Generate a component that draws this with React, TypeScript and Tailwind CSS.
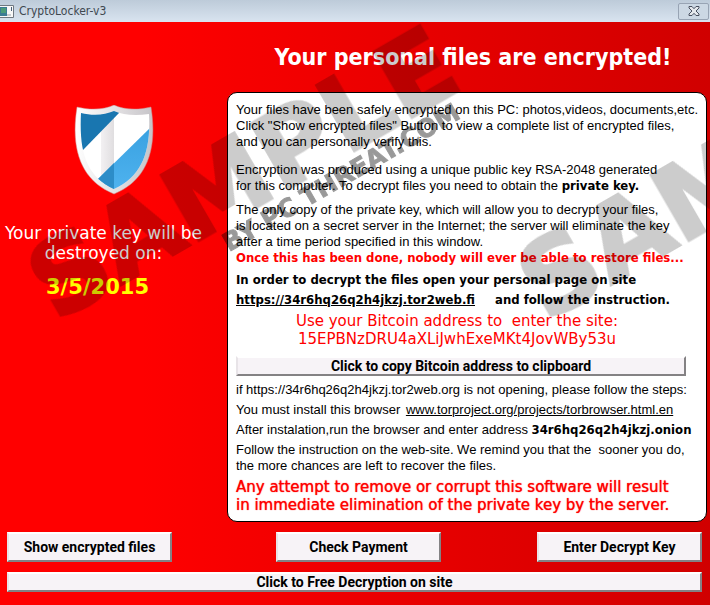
import { useState } from "react";
import clsx from "clsx";

const buttonStyle =
  "border-2 border-t-white border-l-[#e8e4e8] border-r-[#848284] border-b-[#848284] bg-[#f7f3f7] text-center font-['Roboto',sans-serif] text-[14px] leading-4 font-bold text-black";

const boldText = "font-['DejaVu_Sans_Condensed','DejaVu_Sans',sans-serif] font-bold";

const Shield: React.FC = () => (
  <svg viewBox="0 0 80 90" className="h-[90px] w-20" aria-hidden="true">
    <defs>
      <linearGradient id="rim" x1="0" y1="0" x2="1" y2="0">
        <stop offset="0" stopColor="#ffffff" />
        <stop offset="0.5" stopColor="#e4e2e4" />
        <stop offset="1" stopColor="#c6c4c8" />
      </linearGradient>
      <linearGradient id="face" x1="0" y1="0" x2="1" y2="0">
        <stop offset="0.34" stopColor="#ffffff" />
        <stop offset="0.34" stopColor="#f2f0f2" />
        <stop offset="0.5" stopColor="#e0dee0" />
        <stop offset="0.5" stopColor="#ffffff" />
      </linearGradient>
      <linearGradient id="sky" x1="0" y1="0" x2="0" y2="1">
        <stop offset="0" stopColor="#38a0e0" />
        <stop offset="1" stopColor="#50b4f0" />
      </linearGradient>
      <clipPath id="inner">
        <path d="M7 8C19 11 31 10 40 6C49 10 61 11 75 9C77 47 68 71 40 84C12 71 5 47 7 8Z" />
      </clipPath>
    </defs>
    <path
      d="M3 2C15 5 30 5 40 0C50 5 65 5 77 2C84 46 72 76 40 89C8 76-4 46 3 2Z"
      fill="url(#rim)"
      stroke="#d08080"
      strokeWidth="0.5"
    />
    <g clipPath="url(#inner)">
      <rect width="80" height="90" fill="url(#face)" />
      <path d="M0 0H45V8L9 45H0Z" fill="#1976b0" />
      <path d="M24 74L80 19V90H24Z" fill="url(#sky)" />
      <path d="M24 74L40 58V90H24Z" fill="#2d8dc8" />
    </g>
  </svg>
);

const Watermark: React.FC = () => (
  <svg
    className="pointer-events-none absolute inset-0 h-full w-full"
    fontFamily="'DejaVu Sans', sans-serif"
    fontWeight="bold"
    aria-hidden="true"
  >
    <g fontSize="104" opacity="0.2" stroke="#000000" strokeWidth="3">
      <text transform="translate(56 323) rotate(-30)">SAMPLE</text>
      <text transform="translate(546 323) rotate(-30)">SAM</text>
    </g>
    <g fontSize="25" opacity="0.4" stroke="#000000" strokeWidth="1">
      <text transform="translate(229 252) rotate(-30)">BY PC THREAT.COM</text>
    </g>
  </svg>
);

const TitleBar: React.FC<{ onClose: () => void }> = ({ onClose }) => (
  <header className="flex h-[22px] items-center bg-linear-to-b from-[#bdcbd9] to-[#d9e4f0]">
    <svg viewBox="0 0 14 13" className="h-[13px] w-3.5" aria-hidden="true">
      <path d="M0 0.5H13.5V12.5H0" fill="#f8f8f8" stroke="#707880" />
      <rect y="2" width="7" height="9" fill="#3c7c94" />
      <rect x="1" y="3" width="5" height="5" fill="#4c9c78" />
      <rect x="11" y="2" width="1" height="4" fill="#486078" />
      <rect x="7" y="9" width="4" height="2" fill="#c8ccd0" />
    </svg>
    <span className="ml-[5px] text-[12px] text-[#404850]">CryptoLocker-v3</span>
    <button
      type="button"
      aria-label="Close"
      onClick={onClose}
      className="mr-px ml-auto flex h-[17px] w-[31px] items-center justify-center rounded-xs border border-[#98a4b4] bg-[#ccd8e4]"
    >
      <svg viewBox="0 0 12 10" className="h-2.5 w-3">
        <path
          d="M1 .5H4L6 2.7L8 .5H11V2L8 5L11 8V9.5H8L6 7.3L4 9.5H1V8L4 5L1 2Z"
          fill="#e4e8ec"
          stroke="#485060"
        />
      </svg>
    </button>
  </header>
);

const App: React.FC = () => {
  const [open, setOpen] = useState(true);

  return (
    <div
      className={clsx(
        "relative flex min-h-screen flex-col overflow-hidden bg-linear-to-r from-[#ff0000] from-20% to-[#d00000] font-['DejaVu_Sans_Condensed','DejaVu_Sans',sans-serif] text-black",
        !open && "hidden"
      )}
    >
      <TitleBar onClose={() => setOpen(false)} />
      <main className="flex flex-1 flex-col">
        <div className="flex pr-[3px]">
          <aside className="flex w-[227px] shrink-0 flex-col items-center pt-[83px] pr-5 text-center font-['DejaVu_Sans',sans-serif]">
            <div className="pl-5">
              <Shield />
            </div>
            <p className="mt-7 text-[17px] leading-5 whitespace-nowrap text-white">
              Your private key will be
              <br />
              destroyed on:
            </p>
            <p className="mt-3 pr-3 text-[21px] leading-6 font-bold text-[#ffff00]">3/5/2015</p>
          </aside>
          <section className="min-w-0 flex-1">
            <h1 className="pt-5 pl-3 text-center text-[23px] leading-[30px] font-bold text-white">
              Your personal files are encrypted!
            </h1>
            <div className="mt-5 rounded-[10px] border border-black bg-white px-2 pt-[9px] pb-[7px] font-['Liberation_Sans',sans-serif] text-[13px] leading-4 whitespace-nowrap">
              <p>
                Your files have been safely encrypted on this PC: photos,videos, documents,etc.
                <br />
                Click "Show encrypted files" Button to view a complete list of encrypted files,
                <br />
                and you can personally verify this.
              </p>
              <p className="mt-3">
                Encryption was produced using a unique public key RSA-2048 generated
                <br />
                for this computer. To decrypt files you need to obtain the{" "}
                <b className={boldText}>private key.</b>
              </p>
              <p className="mt-2">
                The only copy of the private key, which will allow you to decrypt your files,
                <br />
                is located on a secret server in the Internet; the server will eliminate the key
                <br />
                after a time period specified in this window.
                <br />
                <b className={clsx(boldText, "text-[#ff0000]")}>
                  Once this has been done, nobody will ever be able to restore files...
                </b>
              </p>
              <p className={clsx(boldText, "mt-1.5")}>
                In order to decrypt the files open your personal page on site
              </p>
              <p className={clsx(boldText, "mt-1")}>
                <a href="#" className="underline">
                  https://34r6hq26q2h4jkzj.tor2web.fi
                </a>
                <span className="ml-5">and follow the instruction.</span>
              </p>
              <p className="mt-1 pr-5 text-center font-['DejaVu_Sans',sans-serif] text-[15px] leading-[18px] whitespace-pre text-[#ff0000]">
                {"Use your Bitcoin address to  enter the site:\n15EPBNzDRU4aXLiJwhExeMKt4JovWBy53u"}
              </p>
              <div className="mt-2 pr-3">
                <button type="button" className={clsx(buttonStyle, "block w-full")}>
                  Click to copy Bitcoin address to clipboard
                </button>
              </div>
              <p className="mt-1.5">
                if https://34r6hq26q2h4jkzj.tor2web.org is not opening, please follow the steps:
              </p>
              <p className="mt-1">
                You must install this browser{" "}
                <a href="#" className="ml-0.5 underline">
                  www.torproject.org/projects/torbrowser.html.en
                </a>
              </p>
              <p className="mt-1">
                After instalation,run the browser and enter address{" "}
                <b className={boldText}>34r6hq26q2h4jkzj.onion</b>
              </p>
              <p className="mt-1 whitespace-pre">
                {"Follow the instruction on the web-site. We remind you that the  sooner you do,\nthe more chances are left to recover the files."}
              </p>
              <p className="mt-1 font-['DejaVu_Sans',sans-serif] text-[15px] leading-[18px] text-[#ff0000] text-shadow-[0_0_1px_#ff0000]">
                Any attempt to remove or corrupt this software will result
                <br />
                in immediate elimination of the private key by the server.
              </p>
            </div>
          </section>
        </div>
        <div className="mt-2.5 flex flex-col gap-2.5 pr-2 pl-[7px]">
          <div className="flex justify-between">
            <button type="button" className={clsx(buttonStyle, "h-[30px] w-[165px]")}>
              Show encrypted files
            </button>
            <button type="button" className={clsx(buttonStyle, "ml-2 h-[30px] w-[165px]")}>
              Check Payment
            </button>
            <button type="button" className={clsx(buttonStyle, "h-[30px] w-[165px]")}>
              Enter Decrypt Key
            </button>
          </div>
          <button type="button" className={clsx(buttonStyle, "w-full")}>
            Click to Free Decryption on site
          </button>
        </div>
      </main>
      <Watermark />
    </div>
  );
};

export default App;
